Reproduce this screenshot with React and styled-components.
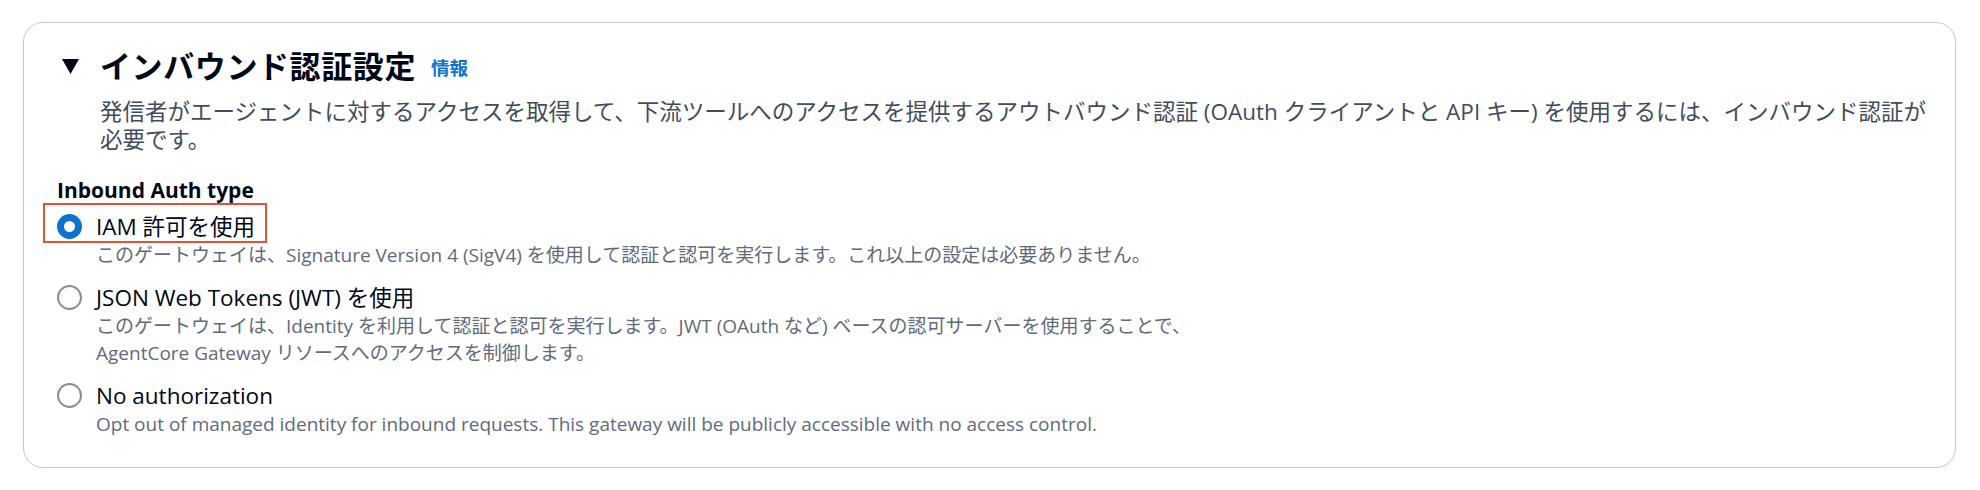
import React, { useState } from "react";
import styled, { createGlobalStyle } from "styled-components";

const Global = createGlobalStyle`
  body {
    margin: 0;
    background: #ffffff;
    font-family: "Open Sans", "Noto Sans CJK JP", sans-serif;
    color: #000716;
  }
`;

const Page = styled.div`
  padding: 22px 24px 22px 23px;
`;

const Card = styled.section`
  border: 1.5px solid #c6c6cd;
  border-radius: 20px;
  padding: 24px 14px 31px 33px;
  background: #fff;
  height: 446px;
  box-sizing: border-box;
`;

const HeaderRow = styled.div`
  display: flex;
  align-items: center;
  height: 38px;
`;

const Caret = styled.svg`
  width: 17px;
  height: 15px;
  margin-left: 5px;
  margin-right: 21px;
  flex: none;
`;

const Title = styled.h2`
  margin: 0;
  font-size: 31px;
  font-weight: 700;
  line-height: 38px;
  letter-spacing: 0.6px;
`;

const Info = styled.a`
  margin-left: 15px;
  font-size: 18.5px;
  font-weight: 700;
  color: #0972d3;
  text-decoration: none;
  line-height: 38px;
  padding-top: 4px;
`;

const Lead = styled.p`
  margin: 13px 0 0 43px;
  font-size: 22.5px;
  line-height: 28px;
  color: #414d5c;
`;

const FieldLabel = styled.div`
  margin-top: 21px;
  font-size: 21px;
  font-weight: 700;
  line-height: 31px;
`;

const Options = styled.div`
  display: flex;
  flex-direction: column;
  gap: 13px;
  margin-top: 5px;
`;

const Option = styled.div`
  display: flex;
  flex-direction: column;
`;

const Choice = styled.label`
  position: relative;
  display: inline-flex;
  align-items: center;
  align-self: flex-start;
  gap: 14px;
  font-size: 22.5px;
  line-height: 31px;
  cursor: pointer;

  ${(p) =>
    p.$marked &&
    `
    &::after {
      content: "";
      position: absolute;
      left: -14px;
      right: -12px;
      top: -8px;
      bottom: -1px;
      border: 2.5px solid #e4503b;
    }
  `}
`;

const Dot = styled.span`
  width: 25px;
  height: 25px;
  border-radius: 50%;
  box-sizing: border-box;
  flex: none;
  border: ${(p) => (p.$on ? "7.5px solid #0972d3" : "2px solid #8c8c94")};
  background: #fff;
`;

const Hint = styled.div`
  margin-left: 39px;
  font-size: 19px;
  line-height: 27px;
  color: #5f6b7a;
`;

const items = [
  {
    id: "iam",
    label: "IAM 許可を使用",
    hint: [
      "このゲートウェイは、Signature Version 4 (SigV4) を使用して認証と認可を実行します。これ以上の設定は必要ありません。",
    ],
  },
  {
    id: "jwt",
    label: "JSON Web Tokens (JWT) を使用",
    hint: [
      "このゲートウェイは、Identity を利用して認証と認可を実行します。JWT (OAuth など) ベースの認可サーバーを使用することで、",
      "AgentCore Gateway リソースへのアクセスを制御します。",
    ],
  },
  {
    id: "none",
    label: "No authorization",
    hint: [
      "Opt out of managed identity for inbound requests. This gateway will be publicly accessible with no access control.",
    ],
  },
];

export default function App() {
  const [value, setValue] = useState("iam");

  return (
    <Page>
      <Global />
      <Card>
        <HeaderRow>
          <Caret viewBox="0 0 17 15">
            <polygon points="0,0 17,0 8.5,15" fill="#000716" />
          </Caret>
          <Title>インバウンド認証設定</Title>
          <Info href="#">情報</Info>
        </HeaderRow>
        <Lead>
          発信者がエージェントに対するアクセスを取得して、下流ツールへのアクセスを提供するアウトバウンド認証 (OAuth クライアントと API キー) を使用するには、インバウンド認証が
          <br />
          必要です。
        </Lead>

        <FieldLabel>Inbound Auth type</FieldLabel>
        <Options>
          {items.map((it) => (
            <Option key={it.id}>
              <Choice $marked={it.id === "iam"} onClick={() => setValue(it.id)}>
                <Dot $on={value === it.id} />
                {it.label}
              </Choice>
              {it.hint.map((h, i) => (
                <Hint key={i}>{h}</Hint>
              ))}
            </Option>
          ))}
        </Options>
      </Card>
    </Page>
  );
}
